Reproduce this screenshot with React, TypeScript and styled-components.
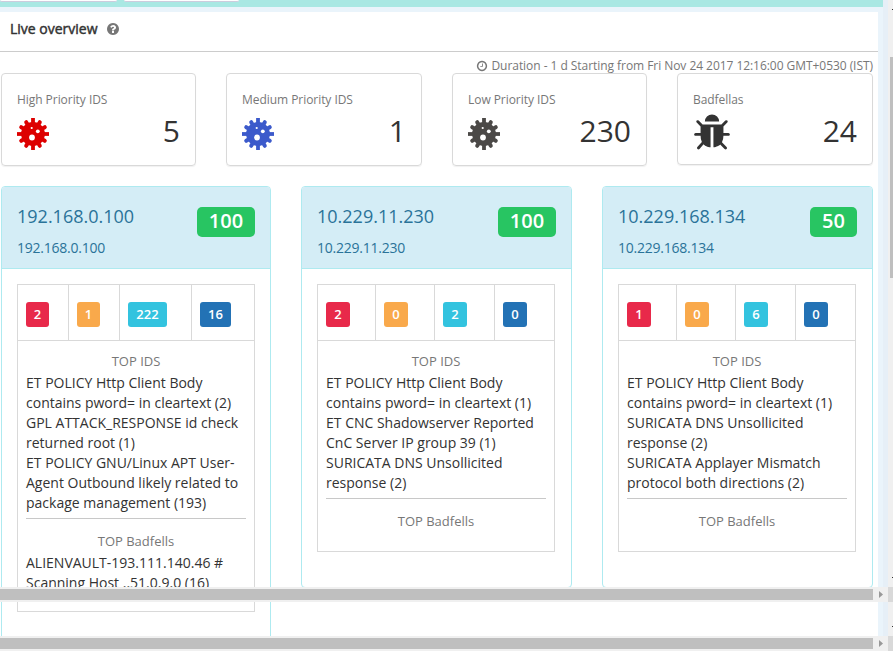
import React from "react";
import styled, { createGlobalStyle } from "styled-components";

const GlobalStyle = createGlobalStyle`
  * { box-sizing: border-box; }
  html, body { margin: 0; padding: 0; overflow: hidden; }
  body {
    width: 893px;
    height: 651px;
    background: #fff;
    color: #333;
    font-family: "Open Sans", "Noto Sans", sans-serif;
    font-size: 14px;
    line-height: 20px;
  }
`;

const Page = styled.div`
  width: 893px;
  height: 651px;
  display: flex;
  flex-direction: column;
  overflow: hidden;
`;

const Pane = styled.div<{ $height: number }>`
  display: flex;
  height: ${(p) => p.$height}px;
  flex: none;
  overflow: hidden;
`;

const Frame = styled.div`
  width: 883px;
  flex: none;
  background: #eaf4fb;
`;

const TopBar = styled.div`
  display: flex;
  gap: 7px;
  height: 7px;
  background: #a9e8e3;
`;

const FieldEdge = styled.div<{ $width: number }>`
  width: ${(p) => p.$width}px;
  height: 2px;
  background: #fff;
  border-bottom: 1px solid #ccd;
  border-radius: 0 0 3px 3px;
`;

const Content = styled.main<{ $top: number }>`
  width: 878px;
  height: 100%;
  margin-top: ${(p) => p.$top}px;
  background: #fff;
`;

const Heading = styled.header`
  display: flex;
  align-items: center;
  gap: 8px;
  height: 40px;
  padding: 0 0 6px 10px;
  border-bottom: 1px solid #ccc;
`;

const Title = styled.h1`
  margin: 0;
  font-size: 14px;
  font-weight: 400;
  -webkit-text-stroke: 0.45px #333;
`;

const Duration = styled.div`
  display: flex;
  justify-content: flex-end;
  align-items: center;
  gap: 3px;
  height: 21px;
  padding: 6px 5px 0 0;
  color: #777;
  font-size: 12px;
  letter-spacing: -0.05px;
  white-space: nowrap;
`;

const StatRow = styled.div`
  display: flex;
  justify-content: space-between;
  align-items: flex-start;
  width: 873px;
  padding-left: 1px;
  height: 113px;
`;

const StatCard = styled.section<{ $width: number; $height: number }>`
  width: ${(p) => p.$width}px;
  height: ${(p) => p.$height}px;
  padding: 16px 15px 0;
  border: 1px solid #d9d9d9;
  border-radius: 4px;
  box-shadow: 0 1px 1px rgba(0, 0, 0, 0.06);
`;

const StatLabel = styled.div`
  color: #777;
  font-size: 12px;
  letter-spacing: -0.05px;
  line-height: 20px;
`;

const StatBody = styled.div`
  display: flex;
  justify-content: space-between;
  align-items: flex-start;
`;

const IconBox = styled.div`
  display: flex;
  height: 40px;
  padding-top: 8px;
`;

const BugBox = styled.div`
  width: 40px;
  height: 40px;
  margin: 3px 0 0 -1px;
`;

const StatValue = styled.div`
  padding-top: 1px;
  font-size: 30px;
  line-height: 40px;
`;

const HostRow = styled.div`
  display: flex;
  justify-content: space-between;
  align-items: flex-start;
  width: 873px;
  padding-left: 1px;
`;

const HostCard = styled.article<{ $width: number; $height: number }>`
  width: ${(p) => p.$width}px;
  height: ${(p) => p.$height}px;
  border: 1px solid #aeeaf0;
  border-radius: 4px;
`;

const HostHeader = styled.div`
  display: flex;
  justify-content: space-between;
  align-items: flex-start;
  height: 82px;
  padding: 19px 15px 0;
  border-bottom: 1px solid #aeeaf0;
  border-radius: 3px 3px 0 0;
  background: #d4edf6;
  color: #2a7399;
`;

const HostName = styled.h2`
  margin: 0;
  font-size: 18px;
  font-weight: 400;
  line-height: 20px;
`;

const HostAddress = styled.div`
  margin-top: 12px;
  font-size: 14px;
  letter-spacing: -0.23px;
`;

const Score = styled.div<{ $width: number }>`
  width: ${(p) => p.$width}px;
  height: 30px;
  margin-top: 1px;
  border-radius: 5px;
  background: #28c562;
  color: #fff;
  font-size: 20px;
  font-weight: 600;
  line-height: 27px;
  text-align: center;
`;

const Report = styled.div<{ $height: number }>`
  width: 238px;
  height: ${(p) => p.$height}px;
  margin: 15px 0 0 15px;
  border: 1px solid #d9d9d9;
`;

const CountRow = styled.div<{ $columns: string }>`
  display: grid;
  grid-template-columns: ${(p) => p.$columns};
  height: 56px;
  border-bottom: 1px solid #d9d9d9;
`;

const CountCell = styled.div`
  padding: 17px 0 0 8px;
  & + & { border-left: 1px solid #d9d9d9; }
`;

const Count = styled.div<{ $color: string; $width: number }>`
  width: ${(p) => p.$width}px;
  height: 25px;
  border-radius: 3px;
  background: ${(p) => p.$color};
  color: #fff;
  font-size: 13px;
  font-weight: 600;
  line-height: 25px;
  text-align: center;
`;

const Alerts = styled.div`
  padding: 10px 8px 0;
`;

const GroupTitle = styled.div`
  height: 22px;
  color: #777;
  font-size: 13px;
  line-height: 20px;
  text-align: center;
`;

const Alert = styled.div`
  white-space: pre-line;
`;

const Rule = styled.hr`
  height: 1px;
  margin: 5px 0 12px;
  border: 0;
  background: #c8c8c8;
`;

const SideGutter = styled.div`
  width: 5px;
  background: #e6eff7;
`;

const SideTrack = styled.div`
  width: 5px;
  display: flex;
  flex-direction: column;
  align-items: flex-end;
  background: #f0f0f0;
`;

const SideThumb = styled.div`
  width: 3px;
  height: 221px;
  margin-top: 47px;
  background: #bfbfbf;
`;

const SideMark = styled.div<{ $top: number }>`
  width: 1px;
  height: 1px;
  margin-top: ${(p) => p.$top}px;
  background: #333;
`;

const ScrollTrack = styled.div`
  display: flex;
  align-items: center;
  height: 15px;
  flex: none;
  background: #f0f0f0;
`;

const ScrollThumb = styled.div`
  width: 873px;
  height: 11px;
  background: #bfbfbf;
`;

const ScrollArrow = styled.div`
  width: 15px;
  padding-left: 6px;
  display: flex;
`;

const ScrollCorner = styled.div`
  width: 5px;
  height: 15px;
  background: #d9d9d9;
`;

const CardTail = styled.div`
  width: 270px;
  height: 34px;
  margin-left: 1px;
  padding-left: 15px;
  border: solid #aeeaf0;
  border-width: 0 1px;
`;

const ReportTail = styled.div`
  width: 238px;
  height: 10px;
  border: 1px solid #d9d9d9;
  border-top: 0;
`;

const QUESTION =
  "M1024 1376v-192q0-14-9-23t-23-9h-192q-14 0-23 9t-9 23v192q0 14 9 23t23 9h192q14 0 23-9t9-23zm256-672q0-88-55.5-163t-138.5-116-170-41q-243 0-371 213-15 24 8 42l132 100q7 6 19 6 16 0 25-12 53-68 86-92 34-24 86-24 48 0 85.5 26t37.5 59q0 38-20 61t-68 45q-63 28-115.5 86.5t-52.5 125.5v36q0 14 9 23t23 9h192q14 0 23-9t9-23q0-19 21.5-49.5t54.5-49.5q32-18 49-28.5t46-35 44.5-48 28-60.5 12.5-81zm384 192q0 209-103 385.5t-279.5 279.5-385.5 103-385.5-103-279.5-279.5-103-385.5 103-385.5 279.5-279.5 385.5-103 385.5 103 279.5 279.5 103 385.5z";
const CLOCK =
  "M1024 544v448q0 14-9 23t-23 9h-320q-14 0-23-9t-9-23v-64q0-14 9-23t23-9h224v-352q0-14 9-23t23-9h64q14 0 23 9t9 23zm416 352q0-148-73-273t-198-198-273-73-273 73-198 198-73 273 73 273 198 198 273 73 273-73 198-198 73-273zm224 0q0 209-103 385.5t-279.5 279.5-385.5 103-385.5-103-279.5-279.5-103-385.5 103-385.5 279.5-279.5 385.5-103 385.5 103 279.5 279.5 103 385.5z";
const BUG =
  "M1696 960q0 26-19 45t-45 19h-224q0 171-67 290l208 209q19 19 19 45t-19 45q-18 19-45 19t-45-19l-198-197q-5 5-15 13t-42 28.5-65 36.5-82 29-97 13v-896h-128v896q-51 0-101.5-13.5t-87-33-66-39-43.5-32.5l-15-14-183 207q-20 21-48 21-24 0-43-16-19-18-20.5-44.5t15.5-46.5l202-227q-58-114-58-274h-224q-26 0-45-19t-19-45 19-45 45-19h224v-294l-173-173q-19-19-19-45t19-45 45-19 45 19l173 173h844l173-173q19-19 45-19t45 19 19 45-19 45l-173 173v294h224q26 0 45 19t19 45zm-480-576h-640q0-133 93.5-226.5t226.5-93.5 226.5 93.5 93.5 226.5z";

const Glyph = ({ d, size, color }: { d: string; size: number; color: string }) => (
  <svg width={size} height={size} viewBox="0 0 1792 1792" fill={color} display="block">
    <path d={d} />
  </svg>
);

const Virus = ({ color }: { color: string }) => (
  <svg width="32" height="32" viewBox="0 0 32 32" display="block">
    <g fill={color} stroke={color}>
      <circle cx="16" cy="16" r="11.9" stroke="none" />
      {[0, 90, 180, 270].map((a) => (
        <path key={a} d="M16 6V0" strokeWidth="3.8" transform={`rotate(${a} 16 16)`} />
      ))}
      {[30, 60, 120, 150, 210, 240, 300, 330].map((a) => (
        <path key={a} d="M16 6V2.4" strokeWidth="4" strokeLinecap="round" transform={`rotate(${a} 16 16)`} />
      ))}
    </g>
    <g fill="#fff">
      <circle cx="14.7" cy="10" r="1.1" />
      <circle cx="20.8" cy="13.3" r="1.9" />
      <circle cx="15" cy="19.5" r="2.9" />
    </g>
  </svg>
);

const STATS = [
  { label: "High Priority IDS", value: "5", color: "#dd0000", width: 195, height: 93 },
  { label: "Medium Priority IDS", value: "1", color: "#3c5acb", width: 196, height: 93 },
  { label: "Low Priority IDS", value: "230", color: "#4b4947", width: 195, height: 93 },
  { label: "Badfellas", value: "24", color: null, width: 196, height: 92 },
];

const COLORS = ["#e8294a", "#f9a94b", "#33c3df", "#2372b5"];

const HOSTS = [
  {
    name: "192.168.0.100",
    score: 100,
    width: 270,
    height: 500,
    report: 400,
    columns: "50px 51px 72px 1fr",
    counts: [2, 1, 222, 16],
    badges: [23, 23, 39, 31],
    ids: [
      "ET POLICY Http Client Body\ncontains pword= in cleartext (2)",
      "GPL ATTACK_RESPONSE id check\nreturned root (1)",
      "ET POLICY GNU/Linux APT User-\nAgent Outbound likely related to\npackage management (193)",
    ],
    bad: ["ALIENVAULT-193.111.140.46 #\nScanning Host ..51.0.9.0 (16)"],
  },
  {
    name: "10.229.11.230",
    score: 100,
    width: 271,
    height: 402,
    report: 268,
    columns: "57px 59px 60px 1fr",
    counts: [2, 0, 2, 0],
    badges: [24, 24, 24, 24],
    ids: [
      "ET POLICY Http Client Body\ncontains pword= in cleartext (1)",
      "ET CNC Shadowserver Reported\nCnC Server IP group 39 (1)",
      "SURICATA DNS Unsollicited\nresponse (2)",
    ],
    bad: [],
  },
  {
    name: "10.229.168.134",
    score: 50,
    width: 271,
    height: 402,
    report: 268,
    columns: "57px 59px 60px 1fr",
    counts: [1, 0, 6, 0],
    badges: [24, 24, 24, 24],
    ids: [
      "ET POLICY Http Client Body\ncontains pword= in cleartext (1)",
      "SURICATA DNS Unsollicited\nresponse (2)",
      "SURICATA Applayer Mismatch\nprotocol both directions (2)",
    ],
    bad: [],
  },
];

const HorizontalScroll = () => (
  <ScrollTrack>
    <ScrollThumb />
    <ScrollArrow>
      <svg width="4" height="7" viewBox="0 0 4 7" fill="#999">
        <path d="M0 0L4 3.5L0 7Z" />
      </svg>
    </ScrollArrow>
    <ScrollCorner />
  </ScrollTrack>
);

export default function App() {
  return (
    <Page>
      <GlobalStyle />
      <Pane $height={587}>
        <Frame>
          <TopBar>
            <FieldEdge $width={117} />
            <FieldEdge $width={115} />
          </TopBar>
          <Content $top={5}>
            <Heading>
              <Title>Live overview</Title>
              <Glyph d={QUESTION} size={14} color="#777" />
            </Heading>
            <Duration>
              <Glyph d={CLOCK} size={12} color="#777" />
              <span>Duration - 1 d Starting from Fri Nov 24 2017 12:16:00 GMT+0530 (IST)</span>
            </Duration>
            <StatRow>
              {STATS.map((s) => (
                <StatCard key={s.label} $width={s.width} $height={s.height}>
                  <StatLabel>{s.label}</StatLabel>
                  <StatBody>
                    {s.color ? (
                      <IconBox>
                        <Virus color={s.color} />
                      </IconBox>
                    ) : (
                      <BugBox>
                        <Glyph d={BUG} size={40} color="#333" />
                      </BugBox>
                    )}
                    <StatValue>{s.value}</StatValue>
                  </StatBody>
                </StatCard>
              ))}
            </StatRow>
            <HostRow>
              {HOSTS.map((h) => (
                <HostCard key={h.name} $width={h.width} $height={h.height}>
                  <HostHeader>
                    <div>
                      <HostName>{h.name}</HostName>
                      <HostAddress>{h.name}</HostAddress>
                    </div>
                    <Score $width={h.score === 100 ? 58 : 47}>{h.score}</Score>
                  </HostHeader>
                  <Report $height={h.report}>
                    <CountRow $columns={h.columns}>
                      {h.counts.map((n, i) => (
                        <CountCell key={i}>
                          <Count $color={COLORS[i]} $width={h.badges[i]}>{n}</Count>
                        </CountCell>
                      ))}
                    </CountRow>
                    <Alerts>
                      <GroupTitle>TOP IDS</GroupTitle>
                      {h.ids.map((t) => <Alert key={t}>{t}</Alert>)}
                      <Rule />
                      <GroupTitle>TOP Badfells</GroupTitle>
                      {h.bad.map((t) => <Alert key={t}>{t}</Alert>)}
                    </Alerts>
                  </Report>
                </HostCard>
              ))}
            </HostRow>
          </Content>
        </Frame>
        <SideGutter />
        <SideTrack>
          <SideMark $top={9} />
          <SideThumb />
          <SideMark $top={299} />
        </SideTrack>
      </Pane>
      <HorizontalScroll />
      <Pane $height={34}>
        <Frame>
          <Content $top={0}>
            <CardTail>
              <ReportTail />
            </CardTail>
          </Content>
        </Frame>
        <SideGutter />
        <SideTrack>
          <SideMark $top={24} />
        </SideTrack>
      </Pane>
      <HorizontalScroll />
    </Page>
  );
}
